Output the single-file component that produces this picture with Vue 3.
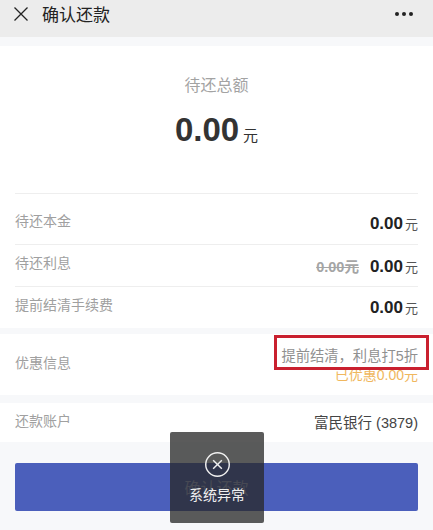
<script setup>
const rows = [
  { label: '待还本金', value: '0.00' },
  { label: '待还利息', value: '0.00', old: '0.00' },
  { label: '提前结清手续费', value: '0.00' }
]
</script>

<template>
  <div class="page">
    <header class="nav">
      <svg class="close" viewBox="0 0 16 16" width="16" height="16" aria-hidden="true">
        <path d="M1.5 1.5L14.5 14.5M14.5 1.5L1.5 14.5" stroke="#222" stroke-width="1.3" fill="none" />
      </svg>
      <span class="nav-title">确认还款</span>
      <span class="dots"><i></i><i></i><i></i></span>
    </header>

    <section class="card summary">
      <div class="total">
        <div class="total-label">待还总额</div>
        <div class="total-amount"><b>0.00</b><span>元</span></div>
      </div>
      <div v-for="row in rows" :key="row.label" class="row">
        <span class="label">{{ row.label }}</span>
        <span class="amounts">
          <span v-if="row.old" class="old">{{ row.old }}元</span>
          <b>{{ row.value }}</b><span class="unit">元</span>
        </span>
      </div>
    </section>

    <section class="card promo">
      <span class="label">优惠信息</span>
      <div class="promo-right">
        <div class="promo-text">提前结清，利息打5折</div>
        <div class="promo-saved">已优惠0.00元</div>
      </div>
      <div class="highlight"></div>
    </section>

    <section class="card account">
      <span class="label">还款账户</span>
      <span class="bank">富民银行 (3879)</span>
    </section>

    <div class="action">
      <button class="submit">确认还款</button>
    </div>

    <div class="toast">
      <svg viewBox="0 0 28 28" width="27" height="27" aria-hidden="true">
        <circle cx="14" cy="14" r="12.2" stroke="#f0f0f0" stroke-width="1.5" fill="none" />
        <path d="M9.5 9.5L18.5 18.5M18.5 9.5L9.5 18.5" stroke="#f0f0f0" stroke-width="1.5" fill="none" />
      </svg>
      <span>系统异常</span>
    </div>
  </div>
</template>

<style>
html, body { margin: 0; background: #f7f8fa; }
</style>

<style scoped>
.page {
  position: relative;
  width: 433px;
  height: 530px;
  overflow: hidden;
  background: #f7f8fa;
  font-family: "Liberation Sans", "Noto Sans CJK SC", sans-serif;
}
.nav {
  height: 37px;
  display: flex;
  align-items: center;
  background: #ececec;
  padding: 0 20px 10px 13px;
  box-sizing: border-box;
}
.close { flex: none; }
.nav-title {
  margin-left: 13px;
  font-size: 17px;
  color: #222;
}
.dots {
  margin-left: auto;
  display: flex;
  gap: 3px;
}
.dots i {
  width: 4px;
  height: 4px;
  border-radius: 50%;
  background: #222;
}
.card { background: #fff; }
.summary {
  margin-top: 9px;
  padding: 0 15px;
  height: 282px;
  box-sizing: border-box;
}
.total {
  height: 147px;
  padding-top: 29px;
  box-sizing: border-box;
  text-align: center;
}
.total-label {
  font-size: 16px;
  line-height: 22px;
  color: #a3a3a3;
}
.total-amount {
  margin-top: 13px;
  display: flex;
  justify-content: center;
  align-items: baseline;
  color: #333;
}
.total-amount b {
  font-size: 33px;
  line-height: 40px;
}
.total-amount span {
  margin-left: 4px;
  font-size: 15px;
}
.row {
  height: 42px;
  display: flex;
  align-items: center;
  justify-content: space-between;
  border-top: 1px solid #eeeeee;
  box-sizing: border-box;
}
.total + .row {
  height: 51px;
  padding-top: 10px;
}
.label {
  font-size: 14px;
  color: #a0a0a0;
}
.row .label { margin-bottom: 8px; }
.amounts {
  display: flex;
  align-items: baseline;
  color: #222;
}
.amounts b { font-size: 17px; }
.unit {
  margin-left: 2px;
  font-size: 13px;
  color: #555;
}
.old {
  margin-right: 11px;
  font-size: 14.5px;
  font-weight: bold;
  color: #a5a5a5;
  text-decoration: line-through;
}
.promo {
  position: relative;
  margin-top: 6px;
  height: 61px;
  padding: 0 15px;
  display: flex;
  align-items: center;
  justify-content: space-between;
}
.promo .label { margin-bottom: 6px; }
.promo-right {
  margin-top: 1px;
  text-align: right;
}
.promo-text {
  font-size: 14.3px;
  line-height: 20px;
  color: #909090;
}
.promo-saved {
  font-size: 14px;
  line-height: 19px;
  color: #f0b75e;
}
.highlight {
  position: absolute;
  left: 274px;
  top: 1px;
  width: 155px;
  height: 35px;
  box-sizing: border-box;
  border: 3px solid #c9202f;
}
.account {
  margin-top: 8px;
  height: 39px;
  padding: 0 15px;
  display: flex;
  align-items: center;
  justify-content: space-between;
}
.account .label { margin-bottom: 6px; }
.bank {
  margin-bottom: 2px;
  font-size: 14.5px;
  color: #444;
}
.action {
  padding: 21px 15px 0;
}
.submit {
  display: block;
  width: 100%;
  height: 48px;
  border: 0;
  border-radius: 2px;
  background: #4b5fbb;
  color: rgba(255, 255, 255, 0.55);
  font: inherit;
  font-size: 16px;
}
.toast {
  position: absolute;
  left: 170px;
  top: 432px;
  width: 94px;
  height: 91px;
  border-radius: 2px;
  background: rgba(40, 40, 40, 0.76);
  color: #f0f0f0;
  font-size: 14px;
  display: flex;
  flex-direction: column;
  align-items: center;
  padding-top: 19px;
  box-sizing: border-box;
  gap: 6px;
}
</style>
